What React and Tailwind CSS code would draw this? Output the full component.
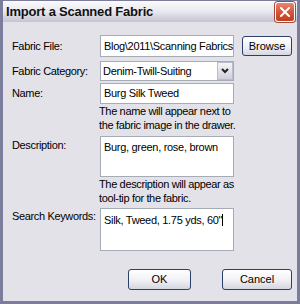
const ui = { fontFamily: '"Liberation Sans", Arial, sans-serif' };

function TextBox({ children, className = "" }) {
  return (
    <div
      className={`w-[134px] bg-white border border-[#a5acb5] px-[3px] text-[11px] tracking-[-0.3px] text-black whitespace-nowrap overflow-hidden ${className}`}
    >
      {children}
    </div>
  );
}

function Button({ label, className = "" }) {
  return (
    <button
      className={`flex items-center justify-center rounded-[3px] border border-[#2b3f68] bg-gradient-to-b from-white via-[#f2f2f6] to-[#d6d6e0] text-[11px] text-black ${className}`}
    >
      {label}
    </button>
  );
}

const label = "w-[88px] shrink-0 whitespace-nowrap text-[11px] tracking-[-0.35px] text-black";
const help = "ml-[87px] whitespace-nowrap text-[11px] tracking-[-0.35px] leading-[14px] text-black";

export default function App() {
  return (
    <div
      style={ui}
      className="w-[300px] h-[304px] flex flex-col border-x-[3px] border-b-[3px] border-[#7c7c9c] bg-[#e3e2e8] overflow-hidden"
    >
      {/* title bar */}
      <div className="-mx-[3px] h-[22px] shrink-0 flex items-center justify-between pl-[5px] pr-[4px] bg-gradient-to-b from-[#fbfbfd] via-[#e8e8ef] to-[#c3c3d3] border-t border-x border-[#7c7c9c]">
        <span className="text-[13px] font-bold text-[#111] tracking-[-0.2px]">
          Import a Scanned Fabric
        </span>
        <div className="w-[20px] h-[20px] rounded-[3px] border border-white bg-gradient-to-b from-[#e8876f] via-[#d5553a] to-[#c2401f] flex items-center justify-center shadow-[0_0_0_1px_#a04a3a]">
          <svg width="10" height="10" viewBox="0 0 10 10">
            <path d="M1 1 L9 9 M9 1 L1 9" stroke="white" strokeWidth="2" strokeLinecap="square" />
          </svg>
        </div>
      </div>

      <div className="flex flex-col pl-[9px] pt-[13px]">
        {/* Fabric File */}
        <div className="flex items-center">
          <span className={label}>Fabric File:</span>
          <TextBox className="h-[22px] leading-[20px]">Blog\2011\Scanning Fabrics</TextBox>
          <Button label="Browse" className="ml-[8px] w-[50px] h-[20px]" />
        </div>

        {/* Fabric Category */}
        <div className="flex items-center mt-[4px]">
          <span className={label}>Fabric Category:</span>
          <div className="w-[134px] h-[20px] bg-white border border-[#a5acb5] flex items-center">
            <span className="flex-1 pl-[2px] text-[11px] tracking-[-0.3px] text-black whitespace-nowrap overflow-hidden">
              Denim-Twill-Suiting
            </span>
            <div className="w-[16px] h-[18px] bg-gradient-to-b from-[#f4f4f8] to-[#cfd0dc] border border-[#b8bccc] flex items-center justify-center">
              <svg width="8" height="6" viewBox="0 0 8 6">
                <path d="M1 1 L4 4 L7 1" stroke="#222" strokeWidth="2" fill="none" />
              </svg>
            </div>
          </div>
        </div>

        {/* Name */}
        <div className="flex items-center mt-[2px]">
          <span className={label}>Name:</span>
          <TextBox className="h-[21px] leading-[19px]">Burg Silk Tweed</TextBox>
        </div>
        <p className={help}>
          The name will appear next to
          <br />
          the fabric image in the drawer.
        </p>

        {/* Description */}
        <div className="flex items-start mt-[4px]">
          <span className={`${label} pt-[2px] leading-[14px]`}>Description:</span>
          <TextBox className="h-[41px] pt-[3px] leading-[14px]">Burg, green, rose, brown</TextBox>
        </div>
        <p className={help}>
          The description will appear as
          <br />
          tool-tip for the fabric.
        </p>

        {/* Search Keywords */}
        <div className="flex items-start mt-[3px]">
          <span className={`${label} pt-[1px] leading-[14px]`}>Search Keywords:</span>
          <TextBox className="h-[43px] pt-[4px] leading-[14px]">
            Silk, Tweed, 1.75 yds, 60"
            <span className="inline-block w-px h-[12px] bg-black align-[-2px]" />
          </TextBox>
        </div>

        {/* Buttons */}
        <div className="flex justify-end mt-[18px] pr-[5px] gap-[31px]">
          <Button label="OK" className="w-[63px] h-[21px]" />
          <Button label="Cancel" className="w-[70px] h-[21px]" />
        </div>
      </div>
    </div>
  );
}
